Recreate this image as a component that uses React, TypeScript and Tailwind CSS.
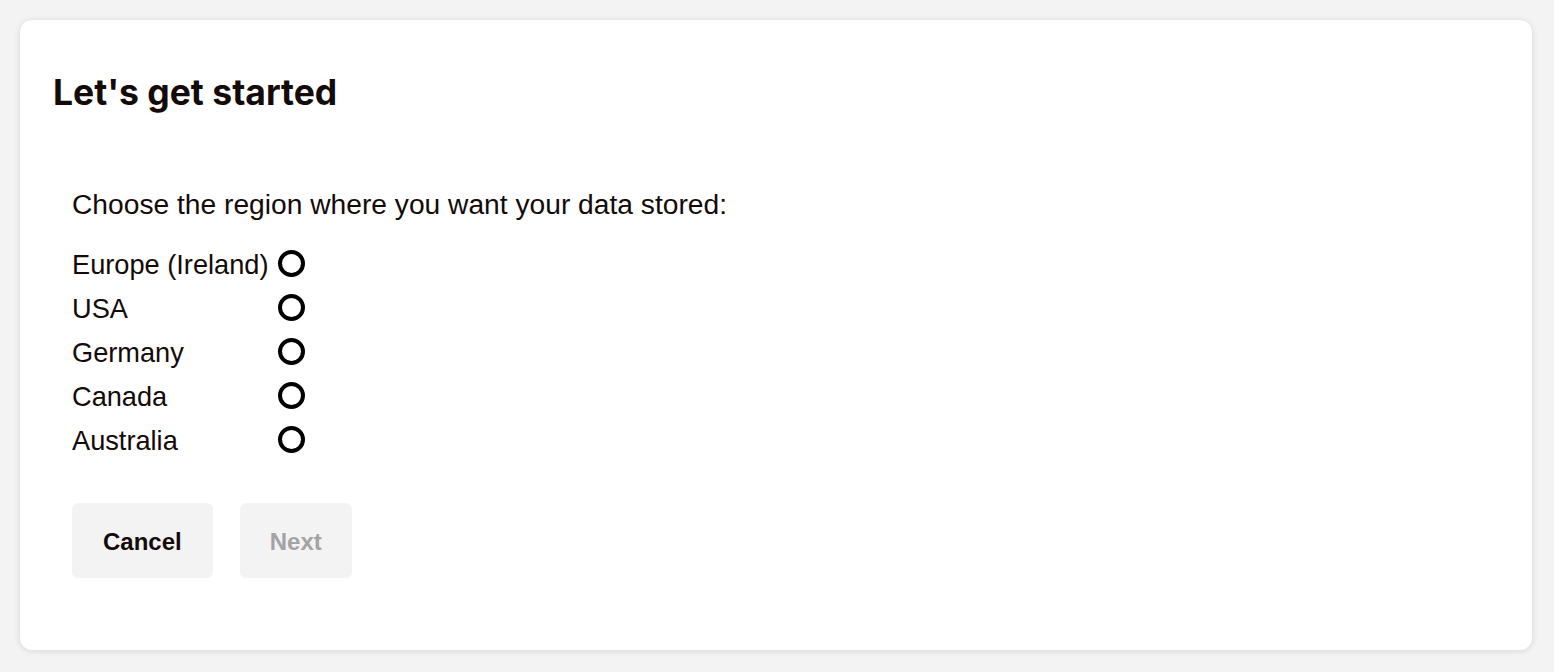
import { useState } from 'react';

const regions = ['Europe (Ireland)', 'USA', 'Germany', 'Canada', 'Australia'];

export default function App() {
  const [region, setRegion] = useState<string | null>(null);

  return (
    <div className="min-h-screen bg-[#f3f3f3] py-5 pl-5 pr-[22px] font-['Liberation_Sans',Arial,sans-serif] text-[#140a0a]">
      <div className="rounded-xl bg-white pl-[33px] pr-8 pt-[53px] pb-[72px] shadow-[0_1px_6px_rgba(0,0,0,0.12)]">
        <h1 className="font-['Inter',sans-serif] text-[35.5px] leading-[40px] font-bold">
          Let's get started
        </h1>

        <div className="pl-[19px] pt-[69px]">
          <p className="text-[28.2px] leading-[44px]">
            Choose the region where you want your data stored:
          </p>

          <div className="mt-[17px] grid w-max grid-cols-[auto_auto] gap-x-[10px]">
            {regions.map((r) => (
              <label key={r} className="contents cursor-pointer">
                <span className="text-[27.2px] leading-[44px]">{r}</span>
                <span className="flex h-[44px] items-center">
                  <input
                    type="radio"
                    name="region"
                    checked={region === r}
                    onChange={() => setRegion(r)}
                    className="sr-only"
                  />
                  <span className="mb-[4px] flex h-[27px] w-[27px] items-center justify-center rounded-full border-4 border-black">
                    {region === r && <span className="h-[10px] w-[10px] rounded-full bg-black" />}
                  </span>
                </span>
              </label>
            ))}
          </div>

          <div className="mt-10 flex gap-[27px]">
            <button className="h-[75px] rounded-md bg-[#f3f3f3] px-[31px] pt-[2px] text-[24px] font-bold">
              Cancel
            </button>
            <button
              disabled={!region}
              className="h-[75px] rounded-md bg-[#f3f3f3] px-[30px] pt-[2px] text-[24px] font-bold text-[#a3a3a3] enabled:text-[#140a0a]"
            >
              Next
            </button>
          </div>
        </div>
      </div>
    </div>
  );
}
